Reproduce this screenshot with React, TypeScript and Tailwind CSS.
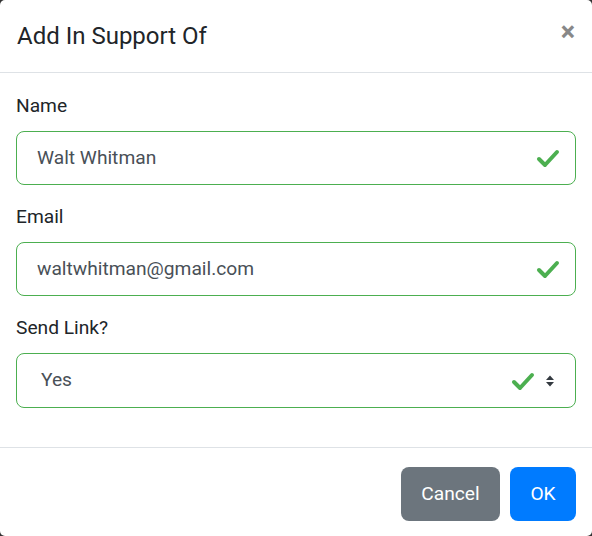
const FONT = { fontFamily: 'Roboto, "Liberation Sans", sans-serif' }

function Check() {
  return (
    <svg width="24" height="20" viewBox="0 0 24 20" className="shrink-0">
      <path d="M3 11l6 6L21 4" fill="none" stroke="#4caf50" strokeWidth="4" strokeLinecap="round" strokeLinejoin="round" />
    </svg>
  )
}

function Field({ label, value }: { label: string; value: string }) {
  return (
    <div className="mb-[19px]">
      <div className="mb-[12px] text-[19.2px] leading-[26px] text-[#212529]">{label}</div>
      <div className="flex h-[54px] items-center rounded-[8px] border border-[#4caf50] pl-[20px] pr-[15px]">
        <span className="flex-1 text-[19.2px] text-[#495057]">{value}</span>
        <Check />
      </div>
    </div>
  )
}

export default function App() {
  return (
    <div className="h-[536px] w-[592px] overflow-hidden bg-[#333]" style={FONT}>
      <div className="h-full rounded-[5px] bg-white">
        <div className="flex h-[73px] items-center justify-between border-b border-[#dee2e6] pl-[17px] pr-[17px]">
          <h5 className="text-[24px] leading-none text-[#212529]">Add In Support Of</h5>
          <span className="-mt-[8px] text-[27px] font-bold leading-none text-[#888]">×</span>
        </div>
        <div className="px-[16px] pb-[20px] pt-[20px]">
          <Field label="Name" value="Walt Whitman" />
          <Field label="Email" value="waltwhitman@gmail.com" />
          <div className="mb-[19px]">
            <div className="mb-[12px] text-[19.2px] leading-[26px] text-[#212529]">Send Link?</div>
            <div className="flex h-[55px] items-center rounded-[8px] border border-[#4caf50] pl-[24px] pr-[20px]">
              <span className="flex-1 text-[19.2px] text-[#495057]">Yes</span>
              <Check />
              <svg width="10" height="14" viewBox="0 0 10 14" className="ml-[10px]">
                <path d="M1 6L5 1.5L9 6Z M1 8L5 12.5L9 8Z" fill="#343a40" />
              </svg>
            </div>
          </div>
        </div>
        <div className="flex justify-end gap-[10px] border-t border-[#dee2e6] px-[16px] pt-[19px]">
          <button className="h-[54px] w-[99px] rounded-[8px] bg-[#6c757d] text-[19.2px] text-white">Cancel</button>
          <button className="h-[54px] w-[66px] rounded-[8px] bg-[#007bff] text-[19.2px] text-white">OK</button>
        </div>
      </div>
    </div>
  )
}
